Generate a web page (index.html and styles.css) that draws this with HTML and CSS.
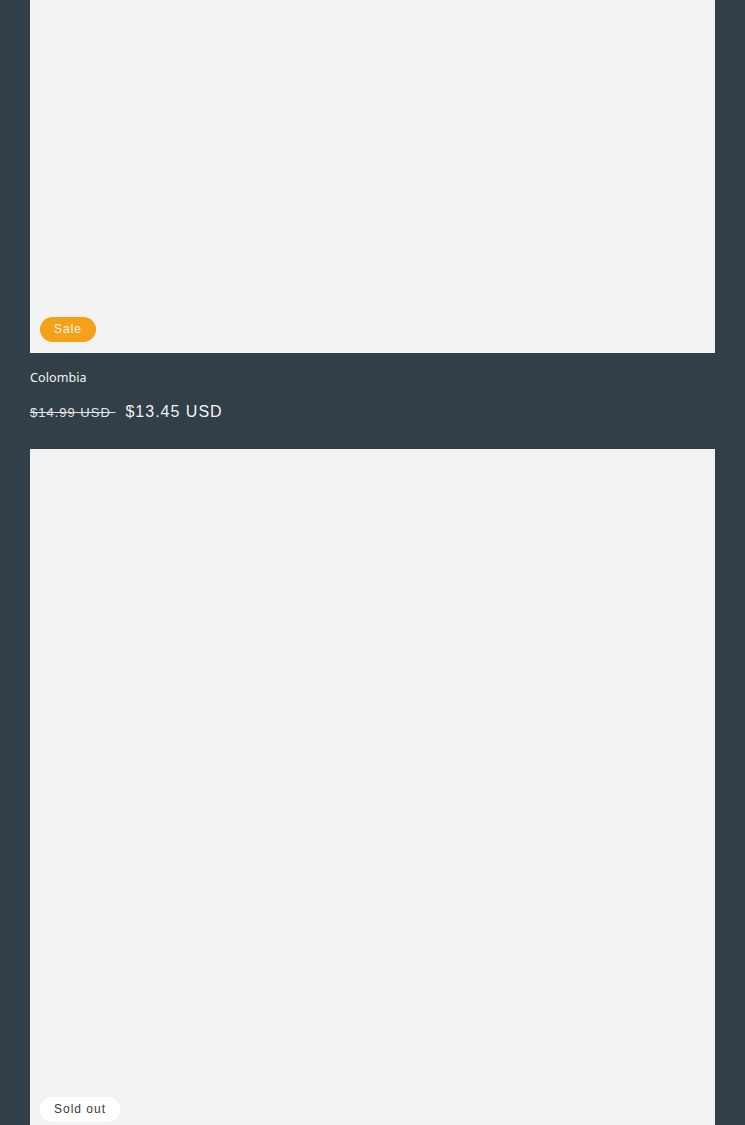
FILE: index.html
```html
<!DOCTYPE html>
<html>
<head>
<meta charset="utf-8">
<link rel="stylesheet" href="styles.css">
</head>
<body>
<div class="list">
  <div class="card">
    <div class="media first">
      <span class="badge sale">Sale</span>
    </div>
    <div class="info">
      <h3 class="title">Colombia</h3>
      <div class="price">
        <s class="old">$14.99 USD&nbsp;</s>
        <span class="new">$13.45 USD</span>
      </div>
    </div>
  </div>
  <div class="card">
    <div class="media second">
      <span class="badge sold">Sold out</span>
    </div>
  </div>
</div>
</body>
</html>
```

FILE: styles.css
```css
html, body {
  margin: 0;
  padding: 0;
  background: #323e48;
  overflow: hidden;
}
.list {
  padding: 0 30px;
  display: flex;
  flex-direction: column;
}
.card {
  display: flex;
  flex-direction: column;
}
.media {
  background: #f3f3f3;
  position: relative;
}
.media.first { height: 353px; }
.media.second { height: 700px; }
.badge {
  position: absolute;
  left: 10px;
  bottom: 11px;
  height: 25px;
  line-height: 25px;
  padding: 0 14px;
  border-radius: 13px;
  font-family: "Liberation Sans", Arial, sans-serif;
  font-size: 12px;
  letter-spacing: 1px;
}
.badge.sale {
  background: #f7a119;
  color: #f3f3f3;
}
.badge.sold {
  background: #ffffff;
  color: #3a3a3a;
  bottom: auto;
  top: 648px;
}
.info {
  padding: 16px 0 26px;
  color: #f3f3f3;
}
.title {
  margin: 0;
  font-family: "Noto Sans", sans-serif;
  font-weight: 400;
  font-size: 12.5px;
  letter-spacing: 0.1px;
  line-height: 18px;
}
.price {
  margin-top: 15px;
  display: flex;
  align-items: baseline;
  gap: 10px;
  font-family: "Liberation Sans", Arial, sans-serif;
  letter-spacing: 1px;
  line-height: 20px;
}
.old {
  font-size: 13px;
  color: #e2e4e6;
}
.new {
  font-size: 16px;
  color: #f3f3f3;
}
```
